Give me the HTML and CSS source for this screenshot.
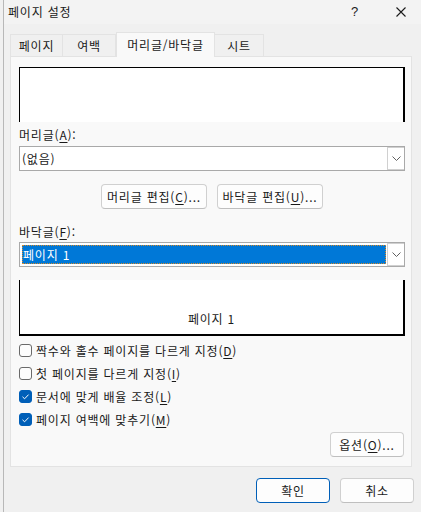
FILE: index.html
```html
<!DOCTYPE html>
<html lang="ko">
<head>
<meta charset="utf-8">
<title>페이지 설정</title>
<link rel="stylesheet" href="styles.css">
</head>
<body>
<div class="window">
  <div class="titlebar">
    <span class="title">페이지 설정</span>
    <span class="help">?</span>
    <span class="close"><svg width="10" height="10" viewBox="0 0 10 10"><path d="M0.5 0.5L9.5 9.5M9.5 0.5L0.5 9.5" stroke="#1a1a1a" stroke-width="1.1" fill="none"/></svg></span>
  </div>
  <div class="tabs">
    <div class="tab t1">페이지</div>
    <div class="tab t2">여백</div>
    <div class="tab active">머리글/바닥글</div>
    <div class="tab t4">시트</div>
  </div>
  <div class="panel">
    <div class="preview header-preview"></div>
    <div class="label l1">머리글(<u>A</u>):</div>
    <div class="combo">
      <div class="combo-text">(없음)</div>
      <div class="combo-btn"><svg width="9" height="5" viewBox="0 0 9 5"><path d="M0.5 0.5L4.5 4.5L8.5 0.5" stroke="#606060" stroke-width="1" fill="none"/></svg></div>
    </div>
    <div class="btn-row">
      <div class="btn edit">머리글 편집(<u>C</u>)...</div>
      <div class="btn edit">바닥글 편집(<u>U</u>)...</div>
    </div>
    <div class="label l2">바닥글(<u>F</u>):</div>
    <div class="combo">
      <div class="combo-text"><span class="sel">페이지 1</span></div>
      <div class="combo-btn"><svg width="9" height="5" viewBox="0 0 9 5"><path d="M0.5 0.5L4.5 4.5L8.5 0.5" stroke="#606060" stroke-width="1" fill="none"/></svg></div>
    </div>
    <div class="preview footer-preview">페이지 1</div>
    <div class="checks">
      <div class="check"><span class="box"></span><span>짝수와 홀수 페이지를 다르게 지정(<u>D</u>)</span></div>
      <div class="check"><span class="box"></span><span>첫 페이지를 다르게 지정(<u>I</u>)</span></div>
      <div class="check"><span class="box on"><svg width="13" height="13" viewBox="0 0 13 13"><path d="M3.5 6.8L5.6 8.8L9.6 4.6" stroke="#fff" stroke-width="1" fill="none"/></svg></span><span>문서에 맞게 배율 조정(<u>L</u>)</span></div>
      <div class="check"><span class="box on"><svg width="13" height="13" viewBox="0 0 13 13"><path d="M3.5 6.8L5.6 8.8L9.6 4.6" stroke="#fff" stroke-width="1" fill="none"/></svg></span><span>페이지 여백에 맞추기(<u>M</u>)</span></div>
    </div>
    <div class="opt-row">
      <div class="btn opt">옵션(<u>O</u>)...</div>
    </div>
  </div>
  <div class="footer">
    <div class="btn dlg ok">확인</div>
    <div class="btn dlg">취소</div>
  </div>
</div>
</body>
</html>
```
FILE: styles.css
```css
* { box-sizing: border-box; }
html, body {
  margin: 0;
  padding: 0;
  width: 421px;
  height: 512px;
  overflow: hidden;
  background: #f0f0f0;
}
body {
  font-family: "Noto Sans CJK KR", "Noto Sans", sans-serif;
  font-size: 12px;
  line-height: 16px;
  letter-spacing: 0.8px;
  color: #1a1a1a;
}
u { text-decoration-thickness: 1px; text-underline-offset: 2px; }
.window {
  margin-left: 3px;
  width: 418px;
  height: 520px;
  border-left: 1px solid #b8b8b8;
  border-bottom-left-radius: 8px;
  background: #f0f0f0;
}
.titlebar {
  height: 24px;
  background: #f3f3f3;
  display: flex;
  align-items: center;
  padding-left: 4px;
}
.title { flex: 1; }
.help { width: 12px; margin-right: 33px; font-family: "Liberation Sans", sans-serif; font-size: 13px; letter-spacing: 0; }
.close { width: 10px; height: 10px; margin-right: 15px; display: flex; }
.close svg { display: block; }
.tabs {
  margin-top: 8px;
  margin-left: 6px;
  display: flex;
  align-items: flex-end;
  height: 24px;
  position: relative;
  z-index: 1;
}
.tab {
  height: 22px;
  border: 1px solid #e3e3e3;
  border-bottom: none;
  background: #f0f0f0;
  display: flex;
  align-items: center;
  justify-content: center;
  padding-top: 1px;
}
.t1 { width: 53px; }
.t2 { width: 53px; border-left: none; }
.t4 { width: 49px; border-left: none; }
.tab.active {
  width: 99px;
  height: 25px;
  margin-bottom: -1px;
  background: #f9f9f9;
  border-color: #e3e3e3;
  padding-bottom: 2px;
}
.panel {
  margin-left: 6px;
  width: 402px;
  height: 411px;
  border: 1px solid #e3e3e3;
  background: #f9f9f9;
  padding: 10px 6px 0 8px;
  display: flex;
  flex-direction: column;
}
.preview { background: #fff; width: 386px; }
.header-preview {
  height: 55px;
  border-top: 1px solid #000;
  border-left: 1px solid #000;
  border-right: 2px solid #000;
}
.footer-preview {
  height: 56px;
  margin-top: 13px;
  border-left: 1px solid #000;
  border-right: 2px solid #000;
  border-bottom: 2px solid #000;
  text-align: center;
  padding-top: 31px;
}
.label { height: 16px; }
.l1 { margin-top: 5px; }
.l2 { margin-top: 15px; }
.combo {
  margin-top: 3px;
  height: 25px;
  width: 386px;
  border: 1px solid #a9a9a9;
  background: #fff;
  display: flex;
}
.l2 + .combo { margin-top: 2px; }
.combo-text {
  flex: 1;
  display: flex;
  align-items: center;
  padding: 2px 1px 2px 2px;
}
.sel {
  display: flex;
  align-items: center;
  width: 100%;
  height: 19px;
  background: #0078d7;
  color: #fff;
  border: 1px dotted #d98b2b;
}
.combo-btn {
  width: 17px;
  border: 1px solid #d0d0d0;
  border-right: none;
  background: #fff;
  display: flex;
  align-items: center;
  justify-content: center;
}
.combo-btn svg { display: block; }
.btn {
  height: 25px;
  border: 1px solid #d0d0d0;
  border-bottom-color: #bfbfbf;
  border-radius: 4px;
  background: #fdfdfd;
  display: flex;
  align-items: center;
  justify-content: center;
}
.btn-row {
  margin-top: 13px;
  display: flex;
  justify-content: center;
  gap: 10px;
}
.edit { width: 106px; }
.checks { margin-top: 3px; display: flex; flex-direction: column; }
.check {
  height: 23px;
  display: flex;
  align-items: center;
  gap: 4px;
}
.box {
  width: 13px;
  height: 13px;
  border: 1px solid #6a6a6a;
  border-radius: 3px;
  background: #fdfdfd;
  display: flex;
}
.box.on { background: #005fb8; border-color: #005fb8; }
.box.on svg { display: block; margin: -1px; }
.opt-row { margin-top: 1px; display: flex; justify-content: flex-end; padding-right: 1px; }
.opt { width: 74px; }
.footer {
  margin-top: 11px;
  display: flex;
  justify-content: flex-end;
  gap: 10px;
  padding-right: 7px;
}
.dlg { width: 74px; height: 25px; }
.ok { border-color: #005fb8; }
```
